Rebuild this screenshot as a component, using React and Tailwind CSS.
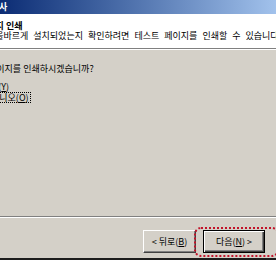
const font = { fontFamily: '"Noto Sans CJK KR", "Noto Sans", sans-serif' };

function WinButton({ children, isDefault, className }) {
  const bevel = isDefault
    ? 'border border-black shadow-[inset_1px_1px_0_#ffffff,inset_-1px_-1px_0_#404040,inset_-2px_-2px_0_#808080]'
    : 'border border-t-white border-l-white border-r-[#404040] border-b-[#404040] shadow-[inset_-1px_-1px_0_#808080]';
  return (
    <div className={`h-[23px] flex items-center justify-center bg-[#d4d0c8] text-[9px] leading-[10px] text-black ${bevel} ${className}`}>
      {children}
    </div>
  );
}

export default function App() {
  return (
    <div className="w-[276px] h-[260px] overflow-hidden flex flex-col bg-[#d4d0c8] text-black" style={font}>
      {/* title bar */}
      <div className="h-[14px] flex items-center bg-gradient-to-r from-[#0c2c74] to-[#a2c2ec] overflow-hidden">
        <span className="ml-[-63px] whitespace-nowrap text-[9px] leading-[10px] font-bold text-white">프린터 추가 마법사</span>
      </div>

      {/* header */}
      <div className="h-[34px] bg-white pt-[7px] overflow-hidden">
        <p className="ml-[-21px] whitespace-nowrap text-[9px] leading-[10px] font-bold">페이지 인쇄</p>
        <p className="ml-[-43px] whitespace-nowrap text-[9px] leading-[10px] [word-spacing:3px]">
          프린터가 올바르게 설치되었는지 확인하려면 테스트 페이지를 인쇄할 수 있습니다.
        </p>
      </div>
      <div className="h-px bg-[#808080]" />
      <div className="h-px bg-white" />

      {/* body */}
      <div className="flex-1 pt-[14px] overflow-hidden">
        <p className="ml-[-12px] whitespace-nowrap text-[9px] leading-[10px]">페이지를 인쇄하시겠습니까?</p>
        <div className="mt-[7px] ml-[-11px] flex flex-col items-start text-[9px] leading-[11px]">
          <span className="whitespace-nowrap px-px">예(<u>Y</u>)</span>
          <span className="whitespace-nowrap px-px border border-dotted border-black leading-[9px]">아니오(<u>O</u>)</span>
        </div>
      </div>

      {/* footer */}
      <div className="h-px bg-[#808080]" />
      <div className="h-px bg-white" />
      <div className="h-[40px] pt-[12px] pr-[11px] flex justify-end items-start gap-[7px]">
        <WinButton className="w-[53px]">&lt; 뒤로(<u>B</u>)</WinButton>
        <div className="relative">
          <WinButton isDefault className="w-[62px]">다음(<u>N</u>) &gt;</WinButton>
          <div className="absolute left-[-9px] right-[-14px] top-[-3px] bottom-[-4px] border-2 border-dotted border-[#c2132a] rounded-[7px]" />
        </div>
      </div>
      <div className="h-[2px] bg-[#1c1c1c]" />
    </div>
  );
}
